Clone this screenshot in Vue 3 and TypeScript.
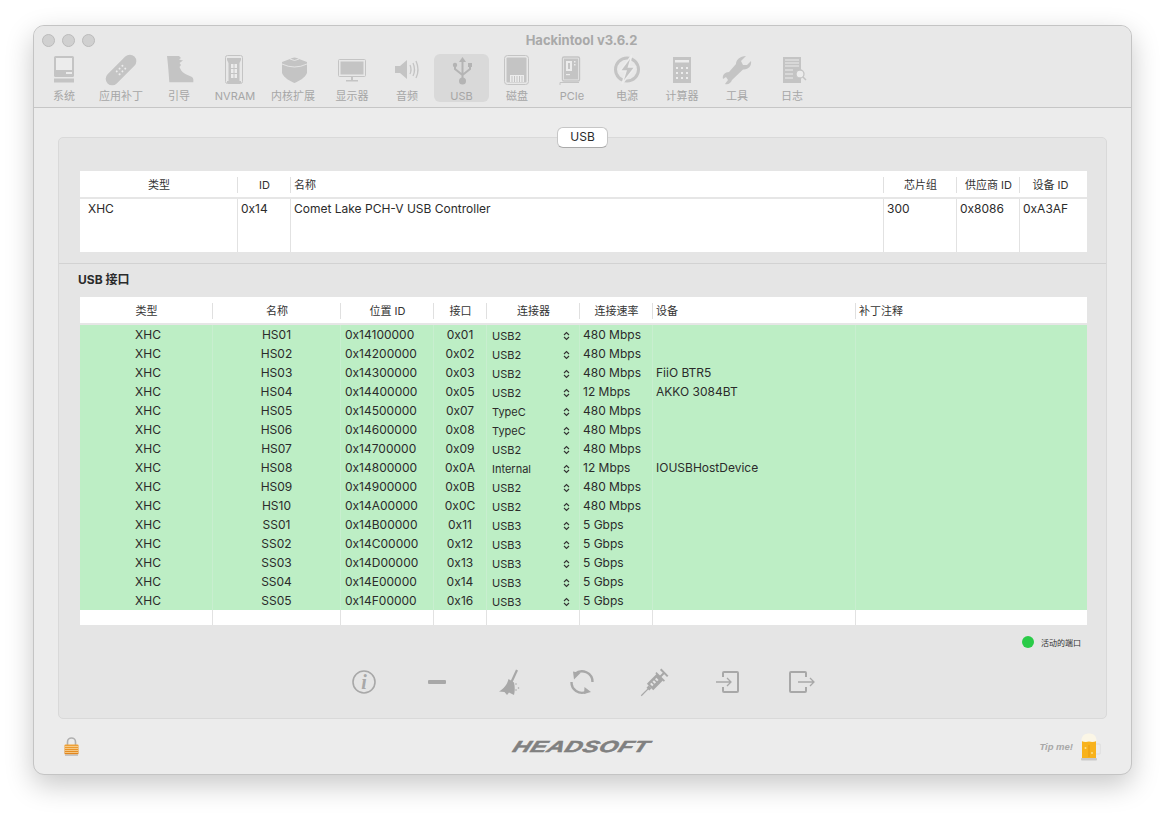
<script setup lang="ts">
interface ToolItem {
  label: string
  width: number
  active?: boolean
  icon: string
}

const L = '#ececec'

const tools: ToolItem[] = [
  { label: '系统', width: 56, icon: `<rect x="8" y="2" width="20" height="21" rx="1.5"/><rect x="10" y="4" width="16" height="12" fill="${L}"/><rect x="20" y="18" width="6" height="2" fill="${L}"/><rect x="8" y="24.5" width="20" height="4"/>` },
  { label: '应用补丁', width: 58, icon: `<g transform="rotate(-45 18 16)"><rect x="-1" y="9.5" width="38" height="13" rx="6.5"/><g fill="${L}"><circle cx="14" cy="14" r="1"/><circle cx="18" cy="14" r="1"/><circle cx="22" cy="14" r="1"/><circle cx="14" cy="18" r="1"/><circle cx="18" cy="18" r="1"/><circle cx="22" cy="18" r="1"/></g></g>` },
  { label: '引导', width: 58, icon: `<path d="M6 2H18L20 4L18 5.500L22 6.500L18.500 9L20 11L18.500 13L20 16C21 19 27 21 31 23C32.500 24 32.500 26 32.300 28.300H8.300C8 22 7 10 6 2Z"/>` },
  { label: 'NVRAM', width: 54, icon: `<rect x="8.5" y="1.5" width="17" height="28" rx="2" fill="none" stroke="#c4c4c4"/><path d="M10 4H24V6L22.5 9V27H24V29H10V27H11.5V9L10 6Z"/><g fill="${L}"><rect x="14" y="10" width="2.5" height="4"/><rect x="17.5" y="10" width="2.5" height="4"/><rect x="14" y="15" width="2.5" height="4"/><rect x="17.5" y="15" width="2.5" height="4"/><rect x="14" y="20" width="2.5" height="4"/><rect x="17.5" y="20" width="2.5" height="4"/></g>` },
  { label: '内核扩展', width: 62, icon: `<path d="M7 8L15 5Q19.5 2 24 5L32 8V19C30 24 24 27 19.5 29C15 27 9 24 7 19Z"/><path d="M7 10Q19.5 16 32 10M15 5Q19.5 8 24 5" fill="none" stroke="${L}" stroke-width=".8"/>` },
  { label: '显示器', width: 56, icon: `<rect x="4.5" y="5.5" width="27" height="17" rx="1" fill="none" stroke="#c4c4c4"/><rect x="6.5" y="7.5" width="23" height="13"/><rect x="17" y="23" width="2" height="3"/><rect x="12" y="26" width="12" height="1.5"/>` },
  { label: '音频', width: 54, icon: `<path d="M6 12H11L18 6V25L11 19H6Z"/><path d="M21 11Q23 15.5 21 20M24 9Q27 15.5 24 22M27 7Q31 15.5 27 24" fill="none" stroke="#c4c4c4" stroke-width="1.3"/>` },
  { label: 'USB', width: 55, active: true, icon: `<g fill="#b4b4b4"><path d="M18.5 3L22 8H15Z"/><circle cx="18.5" cy="27" r="3.5"/><circle cx="11" cy="11" r="2.2"/><rect x="24" y="9" width="4" height="4"/></g><path d="M18.5 6V26M11 12V15L18.5 21M26 12V15L18.5 21" fill="none" stroke="#b4b4b4" stroke-width="2"/>` },
  { label: '磁盘', width: 56, icon: `<rect x="5.5" y="1.5" width="24" height="29" rx="3" fill="none" stroke="#c4c4c4"/><rect x="7.5" y="3.5" width="20" height="25" rx="1"/><rect x="11" y="21" width="14" height="7" fill="${L}"/><path d="M13 22V28M15.5 22V28M18 22V28M20.5 22V28M23 22V28" stroke="#c4c4c4"/>` },
  { label: 'PCIe', width: 54, icon: `<rect x="8.5" y="3" width="17" height="24" rx="1.5" fill="none" stroke="#c4c4c4" stroke-width="1.4"/><rect x="10" y="4.5" width="14" height="21"/><rect x="12" y="7" width="6" height="10" fill="${L}"/><rect x="14" y="9" width="2" height="6"/><rect x="20" y="7" width="1.5" height="1.5" fill="${L}"/><rect x="20" y="10" width="1.5" height="1.5" fill="${L}"/><rect x="12" y="20" width="4" height="1.2" fill="${L}"/><path d="M6 31V28.5H25" fill="none" stroke="#c4c4c4"/>` },
  { label: '电源', width: 56, icon: `<circle cx="18" cy="15.5" r="11.5" fill="none" stroke="#c4c4c4" stroke-width="3"/><path d="M23 1L11 17H17L13 30L26 13H19.5Z" stroke="${L}" stroke-width="1.5"/>` },
  { label: '计算器', width: 54, icon: `<rect x="9" y="3" width="18" height="26"/><rect x="11" y="6" width="14" height="2.5" fill="${L}"/><g fill="${L}"><rect x="12" y="13" width="2" height="2"/><rect x="17" y="13" width="2" height="2"/><rect x="22" y="13" width="2" height="2"/><rect x="12" y="18" width="2" height="2"/><rect x="17" y="18" width="2" height="2"/><rect x="22" y="18" width="2" height="2"/><rect x="12" y="23" width="2" height="2"/><rect x="17" y="23" width="2" height="2"/><rect x="22" y="23" width="2" height="2"/></g>` },
  { label: '工具', width: 56, icon: `<path d="M27 2L22 7L24 11L28 11L32 7C33 12 29 16 24 15.5L13 26C12 29 9 31 6 30L9 26L7 23L4 25C3 21 6 18 10 18L17 10C17 6 21 2 27 2Z"/>` },
  { label: '日志', width: 54, icon: `<rect x="9" y="3" width="18" height="26"/><path d="M11 6H25M11 9H25M11 12H25M11 16H19M11 20H19M11 24H19" stroke="${L}"/><circle cx="26" cy="20" r="4" fill="${L}" stroke="#c4c4c4" stroke-width="1.3"/><path d="M29 23L32 26" stroke="#c4c4c4" stroke-width="1.5"/>` },
]

const D = '#a8a8a8'

const actions: string[] = [
  `<circle cx="16" cy="16" r="11" fill="none" stroke="${D}" stroke-width="1.6"/><text x="16" y="22.500" text-anchor="middle" font-family="Liberation Serif" font-style="italic" font-weight="700" font-size="20" fill="${D}">i</text>`,
  `<rect x="7" y="14" width="18" height="4" rx="1" fill="${D}"/>`,
  `<path d="M23 4L17 17" stroke="${D}" stroke-width="2.200"/><path d="M14.500 13L20 16.500C21 21 21 25 20 29L15 26.500L13 29L10.500 26L5 25.500C9.500 23 13 19 14.500 13Z" fill="${D}"/><g fill="${D}"><circle cx="22" cy="18" r=".8"/><circle cx="24.500" cy="22" r=".8"/><circle cx="22" cy="24" r=".8"/></g>`,
  `<path d="M9 8A10.500 10.500 0 0 1 26.500 16M5.500 16A10.500 10.500 0 0 0 20 26" fill="none" stroke="${D}" stroke-width="2.400"/><path d="M7 5.500L14.500 7L8 13.500ZM18.500 21L25 26L18 28Z" fill="${D}"/>`,
  `<g transform="rotate(-45 16 16)"><path d="M-3.5 16H8" stroke="${D}" stroke-width="1.2"/><rect x="6" y="14" width="3" height="4" fill="${D}"/><rect x="9" y="11.5" width="14" height="9" fill="${D}"/><g fill="#e5e5e5"><rect x="11" y="14" width="2" height="3"/><rect x="14.5" y="14" width="2" height="3"/><rect x="18" y="14" width="2" height="3"/></g><rect x="23" y="15" width="6" height="2" fill="${D}"/><rect x="28" y="11" width="2" height="10" fill="${D}"/><rect x="22.5" y="10" width="1.6" height="12" fill="${D}"/></g>`,
  `<path d="M11 11V7a1 1 0 0 1 1-1H25a1 1 0 0 1 1 1V25a1 1 0 0 1-1 1H12a1 1 0 0 1-1-1V21" fill="none" stroke="${D}" stroke-width="2"/><path d="M4 16H19M15 12L19 16L15 20" fill="none" stroke="${D}" stroke-width="1.3"/>`,
  `<path d="M21 11V7a1 1 0 0 0-1-1H6a1 1 0 0 0-1 1V25a1 1 0 0 0 1 1H20a1 1 0 0 0 1-1V21" fill="none" stroke="${D}" stroke-width="2"/><path d="M13 16H29M25 12L29 16L25 20" fill="none" stroke="${D}" stroke-width="1.3"/>`,
]

interface PortRow {
  name: string
  loc: string
  port: string
  conn: string
  speed: string
  device: string
}

const ports: PortRow[] = [
  { name: 'HS01', loc: '0x14100000', port: '0x01', conn: 'USB2', speed: '480 Mbps', device: '' },
  { name: 'HS02', loc: '0x14200000', port: '0x02', conn: 'USB2', speed: '480 Mbps', device: '' },
  { name: 'HS03', loc: '0x14300000', port: '0x03', conn: 'USB2', speed: '480 Mbps', device: 'FiiO BTR5' },
  { name: 'HS04', loc: '0x14400000', port: '0x05', conn: 'USB2', speed: '12 Mbps', device: 'AKKO 3084BT' },
  { name: 'HS05', loc: '0x14500000', port: '0x07', conn: 'TypeC', speed: '480 Mbps', device: '' },
  { name: 'HS06', loc: '0x14600000', port: '0x08', conn: 'TypeC', speed: '480 Mbps', device: '' },
  { name: 'HS07', loc: '0x14700000', port: '0x09', conn: 'USB2', speed: '480 Mbps', device: '' },
  { name: 'HS08', loc: '0x14800000', port: '0x0A', conn: 'Internal', speed: '12 Mbps', device: 'IOUSBHostDevice' },
  { name: 'HS09', loc: '0x14900000', port: '0x0B', conn: 'USB2', speed: '480 Mbps', device: '' },
  { name: 'HS10', loc: '0x14A00000', port: '0x0C', conn: 'USB2', speed: '480 Mbps', device: '' },
  { name: 'SS01', loc: '0x14B00000', port: '0x11', conn: 'USB3', speed: '5 Gbps', device: '' },
  { name: 'SS02', loc: '0x14C00000', port: '0x12', conn: 'USB3', speed: '5 Gbps', device: '' },
  { name: 'SS03', loc: '0x14D00000', port: '0x13', conn: 'USB3', speed: '5 Gbps', device: '' },
  { name: 'SS04', loc: '0x14E00000', port: '0x14', conn: 'USB3', speed: '5 Gbps', device: '' },
  { name: 'SS05', loc: '0x14F00000', port: '0x16', conn: 'USB3', speed: '5 Gbps', device: '' },
]
</script>

<template>
  <div class="page">
    <div class="window">
      <header class="titlebar">
        <div class="title-row">
          <div class="lights"><i></i><i></i><i></i></div>
          <div class="title">Hackintool v3.6.2</div>
        </div>
        <div class="tools">
          <div
            v-for="item in tools"
            :key="item.label"
            class="tool"
            :class="{ active: item.active }"
            :style="{ width: item.width + 'px' }"
          >
            <svg width="36" height="32" viewBox="0 0 36 32" fill="#c4c4c4" v-html="item.icon"></svg>
            <span>{{ item.label }}</span>
          </div>
        </div>
      </header>

      <main class="body">
        <section class="panel">
          <div class="tab">USB</div>

          <div class="controllers">
            <div class="ctl-grid ctl-head">
              <div class="th">类型</div>
              <div class="th">ID</div>
              <div class="th left">名称</div>
              <div class="th">芯片组</div>
              <div class="th">供应商 ID</div>
              <div class="th last tail">设备 ID</div>
            </div>
            <div class="ctl-grid ctl-row">
              <div class="td first">XHC</div>
              <div class="td">0x14</div>
              <div class="td">Comet Lake PCH-V USB Controller</div>
              <div class="td">300</div>
              <div class="td">0x8086</div>
              <div class="td last">0xA3AF</div>
            </div>
          </div>

          <div class="divider"></div>
          <h3 class="section-title">USB 接口</h3>

          <div class="ports">
            <div class="port-grid port-head">
              <div class="th">类型</div>
              <div class="th">名称</div>
              <div class="th">位置 ID</div>
              <div class="th">接口</div>
              <div class="th">连接器</div>
              <div class="th">连接速率</div>
              <div class="th left">设备</div>
              <div class="th left last">补丁注释</div>
            </div>
            <div v-for="p in ports" :key="p.name" class="port-grid port-row">
              <div class="td center type">XHC</div>
              <div class="td center">{{ p.name }}</div>
              <div class="td loc">{{ p.loc }}</div>
              <div class="td center">{{ p.port }}</div>
              <div class="td conn">
                <span>{{ p.conn }}</span>
                <svg width="7" height="10" viewBox="0 0 7 10" fill="none" stroke="#333" stroke-width="1.1"><path d="M1 4L3.5 1.5L6 4M1 6L3.5 8.5L6 6" /></svg>
              </div>
              <div class="td">{{ p.speed }}</div>
              <div class="td">{{ p.device }}</div>
              <div class="td last"></div>
            </div>
            <div class="port-grid port-filler">
              <div class="td"></div><div class="td"></div><div class="td"></div><div class="td"></div>
              <div class="td"></div><div class="td"></div><div class="td"></div><div class="td last"></div>
            </div>
          </div>

          <div class="legend">
            <i></i>
            <span>活动的端口</span>
          </div>

          <div class="actions">
            <div v-for="(a, i) in actions" :key="i" class="action">
              <svg width="32" height="32" viewBox="0 0 32 32" v-html="a"></svg>
            </div>
          </div>
        </section>

        <footer class="footer">
          <div class="lock">
            <svg width="15" height="20" viewBox="0 0 15 20">
              <defs>
                <linearGradient id="lockBody" x1="0" y1="0" x2="0" y2="1">
                  <stop offset="0" stop-color="#f0a43a" />
                  <stop offset="1" stop-color="#e0831a" />
                </linearGradient>
              </defs>
              <path d="M3.500 8V5a4 4 0 0 1 8 0v3" fill="none" stroke="#b0b0b0" stroke-width="1.600" />
              <rect x="0.500" y="7.500" width="14" height="10" rx="1" fill="url(#lockBody)" />
              <path d="M1 9.500H14M1 11.500H14M1 13.500H14M1 15.500H14" stroke="#f9d59c" stroke-width=".8" />
              <rect x="1" y="17.500" width="13" height="1.500" fill="#c4c4c4" />
            </svg>
          </div>
          <div class="logo"><span>HEADSOFT</span></div>
          <div class="tip">
            <span>Tip me!</span>
            <svg width="22" height="28" viewBox="0 0 22 28">
              <path d="M17 11h2.500a2 2 0 0 1 2 2v6a2 2 0 0 1-2 2H17" fill="none" stroke="#e2e2e2" stroke-width="1.500" />
              <rect x="3" y="8" width="14" height="17" fill="#f8b21c" />
              <rect x="9.500" y="12" width="1" height="12" fill="#e89a10" />
              <circle cx="6.500" cy="15" r="1" fill="#fde08a" />
              <circle cx="13" cy="20" r="1" fill="#fde08a" />
              <path d="M2.500 8C2 3 6 0 10 .5C14 0 18 3 17.500 8Q14 9.500 10 8.500Q6 9.500 2.500 8Z" fill="#fbf6e6" />
              <rect x="2" y="25" width="16" height="2.500" rx="1" fill="#c9c9c9" />
            </svg>
          </div>
        </footer>
      </main>
    </div>
  </div>
</template>

<style>
html,
body {
  margin: 0;
  background: #fff;
}
</style>

<style scoped>
.page {
  width: 1165px;
  height: 816px;
  padding: 25px 33px 41px;
  box-sizing: border-box;
  font-family: Inter, "Noto Sans CJK SC", sans-serif;
  font-size: 12px;
  color: #2b2b2b;
  overflow: hidden;
}

.window {
  width: 1099px;
  height: 750px;
  box-sizing: border-box;
  display: flex;
  flex-direction: column;
  background: #ececec;
  border: 1px solid #c4c4c4;
  border-radius: 11px;
  box-shadow: 0 10px 28px rgba(0, 0, 0, 0.22);
  overflow: hidden;
}

.titlebar {
  height: 82px;
  flex: none;
  box-sizing: border-box;
  background: #e8e8e8;
  border-bottom: 1px solid #c6c6c6;
}

.title-row {
  height: 28px;
  box-sizing: border-box;
  padding-bottom: 1px;
  position: relative;
  display: flex;
  align-items: center;
  justify-content: center;
}

.lights {
  position: absolute;
  left: 8px;
  top: 8px;
  display: flex;
  gap: 7px;
}

.lights i {
  width: 13px;
  height: 13px;
  box-sizing: border-box;
  border-radius: 50%;
  background: #d0d0d0;
  border: 1px solid #bababa;
}

.title {
  font-size: 13px;
  font-weight: 700;
  color: #a9a9a9;
  margin-right: 2px;
}

.tools {
  display: flex;
  padding-left: 2px;
}

.tool {
  height: 48px;
  flex: none;
  display: flex;
  flex-direction: column;
  align-items: center;
  border-radius: 6px;
}

.tool svg {
  flex: none;
}

.tool span {
  font-size: 11px;
  line-height: 14px;
  margin-top: 3px;
  color: #a6a6a6;
  white-space: nowrap;
}

.tool.active {
  background: #d9d9d9;
}

.body {
  flex: 1;
  display: flex;
  flex-direction: column;
  padding: 29px 24px 0;
}

.panel {
  position: relative;
  height: 582px;
  flex: none;
  box-sizing: border-box;
  background: #e5e5e5;
  border: 1px solid #d9d9d9;
  border-radius: 5px;
  padding-top: 33px;
}

.tab {
  position: absolute;
  left: 498px;
  top: -11px;
  width: 51px;
  height: 21px;
  box-sizing: border-box;
  background: #fff;
  border: 1px solid #c6c6c6;
  border-bottom-color: #aaa;
  border-radius: 6px;
  text-align: center;
  line-height: 18px;
}

.controllers,
.ports {
  margin: 0 19px 0 21px;
  background: #fff;
}

.ctl-grid {
  display: grid;
  grid-template-columns: 158px 53px 593px 73px 63px 1fr;
}

.port-grid {
  display: grid;
  grid-template-columns: 133px 128px 93px 53px 93px 73px 203px 1fr;
}

.ctl-head,
.port-head {
  height: 28px;
  box-sizing: border-box;
  border-bottom: 2px solid #e6e6e6;
}

.th {
  position: relative;
  font-size: 11px;
  line-height: 28px;
  text-align: center;
  color: #333;
}

.th::after {
  content: '';
  position: absolute;
  right: 0;
  top: 6px;
  height: 16px;
  width: 1px;
  background: #e0e0e0;
}

.th.last::after {
  display: none;
}

.th.left {
  text-align: left;
  padding-left: 3px;
}

.th.tail {
  padding-right: 6px;
}

.td {
  border-right: 1px solid #e2e2e2;
  padding-left: 3px;
  white-space: nowrap;
}

.td.last {
  border-right: none;
}

.td.first {
  padding-left: 8px;
}

.ctl-row {
  height: 53px;
  line-height: 19px;
}

.port-row {
  height: 19px;
  line-height: 19px;
  background: #bdeec5;
}

.port-row .td {
  border-right-color: #c8eecf;
}

.td.center {
  padding-left: 0;
  text-align: center;
}

.td.type {
  padding-left: 4px;
}

.td.loc {
  padding-left: 4px;
}

.td.conn {
  display: flex;
  align-items: center;
  justify-content: space-between;
  padding: 0 9px 0 5px;
  font-size: 11px;
}

.td.conn span {
  padding-top: 2px;
}

.port-filler {
  height: 15px;
  background: #fff;
}

.divider {
  height: 1px;
  margin-top: 11px;
  background: #d2d2d2;
}

.section-title {
  margin: 9px 0 0 19px;
  height: 24px;
  font-size: 12px;
  font-weight: 700;
  line-height: 14px;
  color: #2b2b2b;
}

.legend {
  display: flex;
  align-items: center;
  justify-content: flex-end;
  gap: 7px;
  height: 12px;
  margin: 11px 25px 0 0;
}

.legend i {
  width: 12px;
  height: 12px;
  border-radius: 50%;
  background: #2acb48;
}

.legend span {
  font-size: 8px;
  color: #333;
}

.actions {
  display: flex;
  justify-content: center;
  margin-top: 18px;
}

.action {
  width: 72.8px;
  display: flex;
  justify-content: center;
}

.footer {
  flex: 1;
  display: grid;
  grid-template-columns: 1fr auto 1fr;
  align-items: center;
  margin: 0 6px;
}

.lock {
  display: flex;
}

.logo {
  width: 140px;
  margin-right: 3px;
  text-align: center;
  font-family: "Liberation Sans", sans-serif;
  font-size: 16px;
  font-weight: 700;
  font-style: italic;
  color: #808080;
}

.logo span {
  display: inline-block;
  transform: scaleX(1.5) skewX(-14deg);
  letter-spacing: 0.3px;
  -webkit-text-stroke: 0.5px #808080;
}

.tip {
  display: flex;
  align-items: center;
  justify-content: flex-end;
  gap: 6px;
}

.tip span {
  font-family: "Liberation Sans", sans-serif;
  font-size: 9.5px;
  font-weight: 700;
  font-style: italic;
  color: #a8a8a8;
  margin-bottom: 1px;
}
</style>
